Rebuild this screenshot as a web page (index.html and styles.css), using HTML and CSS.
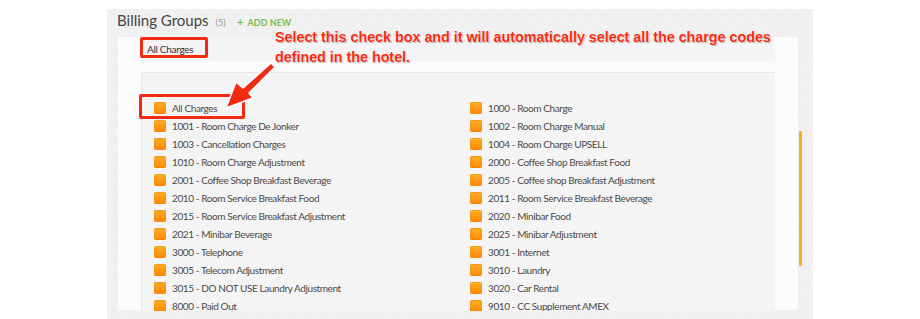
FILE: index.html
```html
<!DOCTYPE html>
<html>
<head>
<meta charset="utf-8">
<link rel="stylesheet" href="styles.css">
</head>
<body>
<div class="page">
  <div class="header">
    <h1 class="title">Billing Groups</h1>
    <span class="count">(5)</span>
    <span class="add"><span class="plus">+</span>ADD NEW</span>
  </div>
  <div class="panel">
    <div class="panel-head">All Charges</div>
    <div class="list">
      <div class="item"><span class="cb"></span>All Charges</div>
      <div class="item"><span class="cb"></span>1000 - Room Charge</div>
      <div class="item"><span class="cb"></span>1001 - Room Charge De Jonker</div>
      <div class="item"><span class="cb"></span>1002 - Room Charge Manual</div>
      <div class="item"><span class="cb"></span>1003 - Cancellation Charges</div>
      <div class="item"><span class="cb"></span>1004 - Room Charge UPSELL</div>
      <div class="item"><span class="cb"></span>1010 - Room Charge Adjustment</div>
      <div class="item"><span class="cb"></span>2000 - Coffee Shop Breakfast Food</div>
      <div class="item"><span class="cb"></span>2001 - Coffee Shop Breakfast Beverage</div>
      <div class="item"><span class="cb"></span>2005 - Coffee shop Breakfast Adjustment</div>
      <div class="item"><span class="cb"></span>2010 - Room Service Breakfast Food</div>
      <div class="item"><span class="cb"></span>2011 - Room Service Breakfast Beverage</div>
      <div class="item"><span class="cb"></span>2015 - Room Service Breakfast Adjustment</div>
      <div class="item"><span class="cb"></span>2020 - Minibar Food</div>
      <div class="item"><span class="cb"></span>2021 - Minibar Beverage</div>
      <div class="item"><span class="cb"></span>2025 - Minibar Adjustment</div>
      <div class="item"><span class="cb"></span>3000 - Telephone</div>
      <div class="item"><span class="cb"></span>3001 - Internet</div>
      <div class="item"><span class="cb"></span>3005 - Telecom Adjustment</div>
      <div class="item"><span class="cb"></span>3010 - Laundry</div>
      <div class="item"><span class="cb"></span>3015 - DO NOT USE Laundry Adjustment</div>
      <div class="item"><span class="cb"></span>3020 - Car Rental</div>
      <div class="item"><span class="cb"></span>8000 - Paid Out</div>
      <div class="item"><span class="cb"></span>9010 - CC Supplement AMEX</div>
    </div>
  </div>
  <div class="scrollbar"></div>
</div>

<div class="callout callout-head"></div>
<div class="callout callout-item"></div>
<p class="note">Select this check box and it will automatically select all the charge codes<br>defined in the hotel.</p>
<svg class="arrow" width="70" height="70" viewBox="0 0 70 70">
  <polygon points="50,5 54,9 28,35 32,40 5,50 15,24 22,30" fill="#f22a12" stroke="#fff" stroke-width="1.5" stroke-linejoin="round"/>
</svg>
</body>
</html>
```

FILE: styles.css
```css
html, body {
  margin: 0;
  padding: 0;
  background: #ffffff;
}

body {
  width: 920px;
  height: 319px;
  overflow: hidden;
  position: relative;
  font-family: Lato, "Open Sans", sans-serif;
}

.page {
  position: relative;
  margin: 9px 0 0 107px;
  width: 706px;
  height: 320px;
  background-color: #efefef;
  background-image: repeating-linear-gradient(45deg, rgba(255,255,255,0.25) 0 1px, transparent 1px 3px);
}

.header {
  display: flex;
  align-items: baseline;
  height: 28px;
  padding-left: 10px;
}

.title {
  margin: 0;
  font-size: 15px;
  font-weight: 400;
  color: #444;
  line-height: 20px;
  padding-top: 1px;
}

.count {
  margin-left: 7px;
  font-size: 9px;
  color: #9a9a9a;
}

.add {
  margin-left: 11px;
  font-size: 9px;
  font-weight: 700;
  color: #7dbb4a;
}

.plus {
  font-size: 12px;
  font-weight: 700;
  margin-right: 4px;
}

.panel {
  margin-left: 11px;
  width: 634px;
  height: 273px;
  padding: 0 23px;
  background: #fbfbfb;
}

.panel-head {
  height: 24px;
  line-height: 24px;
  padding-left: 6px;
  background: #f4f4f4;
  font-size: 10px;
  letter-spacing: -0.3px;
  color: #333;
  margin-bottom: 11px;
}

.list {
  display: grid;
  grid-template-columns: 316px 1fr;
  grid-auto-rows: 18px;
  padding: 26px 0 0 12px;
  height: 212px;
  overflow: hidden;
  background: #f4f4f4;
  border-top: 1px solid #e6e6e6;
  border-left: 1px solid #e9e9e9;
}

.item {
  display: flex;
  align-items: center;
  font-size: 10px;
  letter-spacing: -0.4px;
  color: #4a4a4a;
  white-space: nowrap;
}

.cb {
  width: 12px;
  height: 12px;
  margin-right: 6px;
  border-radius: 2px;
  background: linear-gradient(#ffae2b, #ff8a00);
  box-shadow: inset 0 0 0 1px rgba(230,120,0,0.35);
  flex: none;
}

.scrollbar {
  position: absolute;
  left: 692px;
  top: 122px;
  width: 3px;
  height: 135px;
  background: #fbad1b;
  border-radius: 1px;
}

.callout {
  position: absolute;
  border: 3px solid #f22a12;
  border-radius: 2px;
  box-sizing: border-box;
}

.callout-head {
  left: 140px;
  top: 37px;
  width: 68px;
  height: 21px;
}

.callout-item {
  left: 139px;
  top: 94px;
  width: 106px;
  height: 25px;
}

.note {
  position: absolute;
  left: 275px;
  top: 27px;
  margin: 0;
  font-family: "Liberation Sans", Arial, sans-serif;
  font-weight: 700;
  font-size: 14.3px;
  line-height: 20px;
  color: #f42a12;
  text-shadow: 0 0 1px #fff, 0 0 1px #fff, 1px 1px 1px rgba(0,0,0,0.3);
}

.arrow {
  position: absolute;
  left: 221px;
  top: 58px;
}
```
